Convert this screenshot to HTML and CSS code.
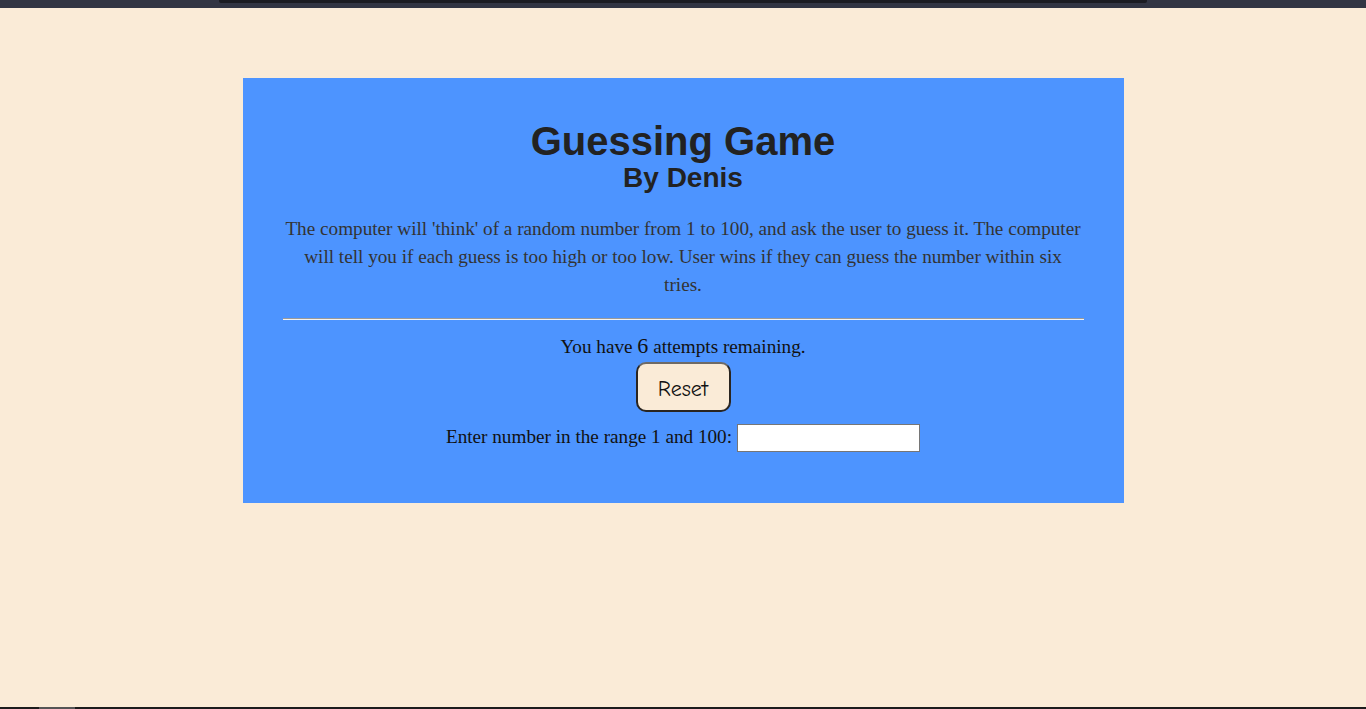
FILE: index.html
```
<!DOCTYPE html>
<html lang="en">
<head>
<meta charset="utf-8">
<title>Guessing Game</title>
<link rel="stylesheet" href="styles.css">
</head>
<body>
<div class="page">
  <div class="topbar"><div class="topbar-tab"></div></div>
  <main class="main">
    <section class="card">
      <h1 class="title">Guessing Game</h1>
      <h2 class="subtitle">By Denis</h2>
      <p class="intro">The computer will 'think' of a random number from 1 to 100, and ask the user to guess it. The computer will tell you if each guess is too high or too low. User wins if they can guess the number within six tries.</p>
      <hr class="divider">
      <p class="status">You have <span class="num">6</span> attempts remaining.</p>
      <div class="actions"><button class="reset" type="button">Reset</button></div>
      <div class="entry">
        <label class="entry-label" for="guess">Enter number in the range 1 and 100:</label>
        <input class="entry-input" id="guess" type="text">
      </div>
    </section>
  </main>
  <div class="bottombar"><div class="bottombar-seg"></div></div>
</div>
</body>
</html>
```
FILE: styles.css
```
html, body {
  margin: 0;
  padding: 0;
  background: #faebd7;
}
.page {
  height: 709px;
  display: flex;
  flex-direction: column;
  overflow: hidden;
}
.topbar {
  height: 8px;
  flex: 0 0 8px;
  background: #323543;
  position: relative;
}
.topbar-tab {
  position: absolute;
  left: 219px;
  width: 928px;
  top: 0;
  height: 3px;
  background: #1b1c22;
  border-radius: 0 0 2px 2px;
}
.main {
  flex: 1;
  padding-top: 70px;
}
.card {
  box-sizing: border-box;
  width: 881px;
  margin: 0 auto;
  background: #4d94ff;
  padding: 41px 40px 51px 40px;
  text-align: center;
}
.title {
  margin: 0;
  font-family: "Liberation Sans", Arial, sans-serif;
  font-weight: bold;
  font-size: 40px;
  line-height: 45px;
  color: #222;
}
.subtitle {
  margin: 0;
  font-family: "Liberation Sans", Arial, sans-serif;
  font-weight: bold;
  font-size: 28px;
  line-height: 28px;
  color: #222;
}
.intro {
  margin: 23px 0 0 0;
  padding: 0 1px;
  font-family: "Liberation Serif", "Times New Roman", serif;
  font-size: 19.2px;
  line-height: 28px;
  color: #333;
}
.divider {
  margin: 19px 0 0 0;
  height: 0;
  border: 0;
  border-top: 1px solid #9a9a9a;
  border-bottom: 1px solid #f2f2f2;
}
.status {
  margin: 15px 0 0 0;
  font-family: "Liberation Serif", "Times New Roman", serif;
  font-size: 19.2px;
  line-height: 24px;
  color: #111;
}
.num {
  font-size: 22px;
  line-height: 20px;
}
.actions {
  margin-top: 3px;
  display: flex;
  justify-content: center;
}
.reset {
  box-sizing: border-box;
  width: 95px;
  height: 50px;
  background: #faebd7;
  border: 2px solid #2a2520;
  border-top-color: #6e6a66;
  border-radius: 10px;
  font-family: "Comic Sans MS", "Comic Neue", cursive;
  font-size: 22px;
  color: #111;
  padding: 3px 0 0 0;
}
.entry {
  margin-top: 12px;
  display: flex;
  justify-content: center;
  align-items: center;
  gap: 5px;
}
.entry-label {
  font-family: "Liberation Serif", "Times New Roman", serif;
  font-size: 19.2px;
  line-height: 22px;
  color: #111;
  padding-bottom: 2px;
}
.entry-input {
  box-sizing: border-box;
  width: 183px;
  height: 28px;
  border: 1px solid #767676;
  background: #fff;
  margin: 0;
  padding: 1px 2px;
}
.bottombar {
  height: 2px;
  flex: 0 0 2px;
  background: #1c1c1c;
  position: relative;
}
.bottombar-seg {
  position: absolute;
  left: 39px;
  width: 36px;
  top: 0;
  height: 2px;
  background: #555;
}
```
